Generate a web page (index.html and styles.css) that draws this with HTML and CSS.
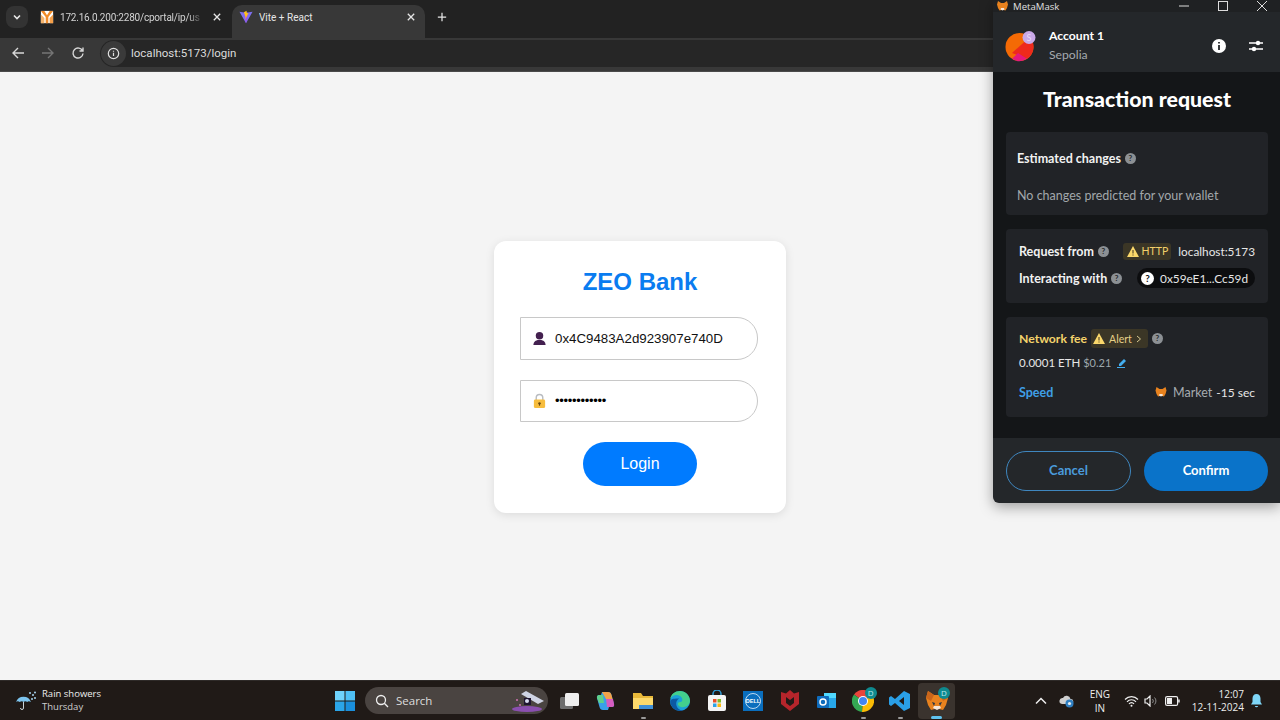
FILE: index.html
```html
<!DOCTYPE html>
<html lang="en">
<head>
<meta charset="utf-8">
<title>Vite + React</title>
<link rel="stylesheet" href="styles.css">
</head>
<body>
<div class="desktop">
  <header class="chrome">
    <div class="tabstrip">
      <button class="tab-search"><svg width="10" height="10" viewBox="0 0 10 10"><path d="M2 3.5 5 6.5 8 3.5" fill="none" stroke="#e8e8e8" stroke-width="1.6"/></svg></button>
      <div class="tab">
        <svg class="favicon" width="14" height="16" viewBox="0 0 16 16"><rect x="1" y="1" width="14" height="14" fill="#fff"/><path d="M1 1h4l3 5 3-5h4L9.500 8v7h-3V8z" fill="#f28c28"/><path d="M1 5l4 4v6H1z" fill="#f5b56e"/><path d="M15 5l-4 4v6h4z" fill="#f5a04a"/></svg>
        <span class="tab-title fade">172.16.0.200:2280/cportal/ip/us</span>
        <svg class="tab-x" width="8" height="8" viewBox="0 0 8 8"><path d="M.8.8l6.400 6.400M7.200.8.800 7.200" stroke="#e6e6e6" stroke-width="1.300"/></svg>
      </div>
      <div class="tab active">
        <svg class="favicon" width="14" height="14" viewBox="0 0 16 16"><path d="M0.500 2 8 3.200 15.500 2 8 15z" fill="#7e6ff0"/><path d="M8 15 5.500 3 8 3.200 10.500 3z" fill="#a64ee8"/><path d="M8.600 0.800 5.600 2.600 7.500 8 7 11 10.800 3.400 9 3.800z" fill="#ffc517"/></svg>
        <span class="tab-title">Vite + React</span>
        <svg class="tab-x" width="8" height="8" viewBox="0 0 8 8"><path d="M.8.8l6.400 6.400M7.200.8.800 7.200" stroke="#e6e6e6" stroke-width="1.300"/></svg>
      </div>
      <svg class="new-tab" width="10" height="10" viewBox="0 0 12 12"><path d="M6 1v10M1 6h10" stroke="#e6e6e6" stroke-width="1.500"/></svg>
    </div>
    <div class="toolbar">
      <svg width="14" height="14" viewBox="0 0 14 14"><path d="M13 7H2M7 2 2 7l5 5" fill="none" stroke="#d8d8d8" stroke-width="1.400"/></svg>
      <svg width="14" height="14" viewBox="0 0 14 14"><path d="M1 7h11M7 2l5 5-5 5" fill="none" stroke="#757575" stroke-width="1.400"/></svg>
      <svg width="14" height="14" viewBox="0 0 14 14"><path d="M11.600 5A5 5 0 1 0 12 7.500M12 1.500V5H8.500" fill="none" stroke="#d8d8d8" stroke-width="1.400"/></svg>
      <div class="omnibox">
        <span class="site-info"><svg width="13" height="13" viewBox="0 0 14 14"><circle cx="7" cy="7" r="5.600" fill="none" stroke="#e0e0e0" stroke-width="1.300"/><path d="M7 6.200v3.600M7 4v1.200" stroke="#e0e0e0" stroke-width="1.300"/></svg></span>
        <span class="url">localhost:5173/login</span>
      </div>
    </div>
  </header>

  <main class="page">
    <form class="card">
      <h1 class="brand">ZEO Bank</h1>
      <div class="field">
        <svg class="field-icon" width="15" height="15" viewBox="0 0 16 16"><circle cx="8" cy="5" r="4" fill="#43204f"/><path d="M1.500 15c0-4 3-5 4.500-5.500h4c1.500.5 4.500 1.500 4.500 5.500z" fill="#43204f"/></svg>
        <span class="field-value">0x4C9483A2d923907e740D</span>
      </div>
      <div class="field">
        <svg class="field-icon" width="15" height="16" viewBox="0 0 16 16"><path d="M4.500 7V4.500a3.500 3.500 0 0 1 7 0V7" fill="none" stroke="#b9bcc0" stroke-width="1.500"/><rect x="2" y="6.500" width="12" height="9" rx="1.500" fill="#f7bd3e"/><circle cx="8" cy="10.500" r="1.300" fill="#6b4a10"/><path d="M8 11v2" stroke="#6b4a10" stroke-width="1.200"/></svg>
        <span class="field-dots">••••••••••••</span>
      </div>
      <button class="login" type="button">Login</button>
    </form>
  </main>

  <footer class="taskbar">
    <div class="weather">
      <svg width="22" height="22" viewBox="0 0 22 22"><path d="M1 12a8 8 0 0 1 15 0c-1.500-1-3-1-3.800 0-1-1-2.600-1-3.700 0-1-1-2.600-1-3.700 0-1.400-1-2.800-1-3.800 0z" fill="#7cc4ee"/><path d="M8.500 12v6a1.500 1.500 0 0 1-3 0" fill="none" stroke="#c9d4da" stroke-width="1"/><g fill="#a6d4f0"><circle cx="15" cy="3" r="1"/><circle cx="18" cy="5" r="1"/><circle cx="20" cy="2.500" r="1"/><circle cx="20" cy="8" r="1"/><circle cx="17" cy="9" r="1"/></g></svg>
      <div class="weather-text"><span class="w1">Rain showers</span><span class="w2">Thursday</span></div>
    </div>
    <div class="task-center">
      <svg width="20" height="20" viewBox="0 0 20 20"><rect x="0" y="0" width="9.500" height="9.500" fill="#6fd2fb"/><rect x="10.500" y="0" width="9.500" height="9.500" fill="#4fc0f5"/><rect x="0" y="10.500" width="9.500" height="9.500" fill="#2ba5e8"/><rect x="10.500" y="10.500" width="9.500" height="9.500" fill="#1a8fdc"/></svg>
      <div class="search">
        <svg width="14" height="14" viewBox="0 0 14 14"><circle cx="6" cy="6" r="4.500" fill="none" stroke="#eee" stroke-width="1.300"/><path d="M9.300 9.300 13 13" stroke="#eee" stroke-width="1.300"/></svg>
        <span class="search-text">Search</span>
        <svg class="search-art" width="34" height="26" viewBox="0 0 34 26"><ellipse cx="16" cy="21" rx="15" ry="3" fill="#8a4fb0"/><path d="M15 3 33 13 27 16 10 6z" fill="#cfd4e4"/><rect x="13" y="10" width="7" height="7" fill="#1e1530"/><circle cx="16" cy="13" r="2" fill="#d8dcf0"/><circle cx="6" cy="12" r="1" fill="#d16fb0"/><circle cx="9" cy="17" r="1" fill="#d16fb0"/></svg>
      </div>
      <div class="task-apps">
        <span class="app"><svg width="22" height="22" viewBox="0 0 22 22"><rect x="1" y="7" width="13" height="12" rx="1.500" fill="#6d6d6d"/><rect x="6" y="3" width="14" height="13" rx="1.500" fill="#eeeeee"/></svg></span>
        <span class="app"><svg width="22" height="22" viewBox="0 0 22 22"><path d="M7 2h6c2 0 3 1 3.500 3L19 14c.5 2-.5 3-2 3h-3l-1 3H8c-2 0-3-1-3.500-3L2 8c-.5-2 1-3 2-3h2z" fill="#3aa0e8"/><path d="M7 2h6c2 0 3 1 3.500 3l1 4H11z" fill="#f3a34a"/><path d="M11 9h7l1 5c.5 2-.5 3-2 3h-5z" fill="#d65cc0"/><path d="M2 8c-.5-2 1-3 2-3h4l1 8H4z" fill="#5fd08a"/></svg></span>
        <span class="app dot"><svg width="22" height="22" viewBox="0 0 22 22"><path d="M1 3h8l2 3h10v13H1z" fill="#e9b93a"/><path d="M1 8h20v11H1z" fill="#fcd96b"/><rect x="7" y="15" width="14" height="4" fill="#3f8fd6"/></svg></span>
        <span class="app"><svg width="22" height="22" viewBox="0 0 22 22"><circle cx="11" cy="11" r="10" fill="#1ba0d8"/><path d="M21 11c0-6-5-10-10-10C6 1 2 4 1.200 9 3 5 8 4 11 6c3 2 3 5 1 6h-1c-3 0-3 4 1 5 4 1 9-2 9-6z" fill="#43cf8d"/><path d="M1.200 11c0 6 5 10 10 10 1 0 2 0 3-.5-4 0-7-3-7-7 0-2 1-4 3-5-4 0-8 0-9 2.500z" fill="#0c59a4"/></svg></span>
        <span class="app"><svg width="22" height="22" viewBox="0 0 22 22"><path d="M7 6V4a4 4 0 0 1 8 0v2" fill="none" stroke="#2f9bd6" stroke-width="1.500"/><rect x="2" y="5" width="18" height="16" rx="2" fill="#f4f4f4"/><rect x="7" y="9" width="3.500" height="3.500" fill="#ea4f2a"/><rect x="11.500" y="9" width="3.500" height="3.500" fill="#7db928"/><rect x="7" y="13.500" width="3.500" height="3.500" fill="#2ba3e8"/><rect x="11.500" y="13.500" width="3.500" height="3.500" fill="#fbb80f"/></svg></span>
        <span class="app"><svg width="20" height="20" viewBox="0 0 20 20"><rect width="20" height="20" fill="#0a6ebd"/><circle cx="10" cy="10" r="7.500" fill="none" stroke="#e8f2fa" stroke-width=".8"/><text x="10" y="12" class="dell">DELL</text></svg></span>
        <span class="app"><svg width="18" height="21" viewBox="0 0 18 21"><path d="M0 2l5 1.500L9 0l4 3.500L18 2v12l-9 7-9-7z" fill="#b5252b"/><path d="M5 7l4 3 4-3v6l-4 3-4-3z" fill="#201a17"/></svg></span>
        <span class="app"><svg width="22" height="22" viewBox="0 0 22 22"><path d="M8 3h12v15H8z" fill="#28a8ea"/><path d="M8 3h12v5H8z" fill="#50d9ff"/><rect x="1" y="6" width="12" height="12" rx="1" fill="#0f6cbd"/><circle cx="7" cy="12" r="3" fill="none" stroke="#fff" stroke-width="1.500"/></svg></span>
        <span class="app dot badged"><svg width="22" height="22" viewBox="0 0 22 22"><path d="M11 11 20.500 5.500A11 11 0 0 0 2 4.500z" fill="#e8453c"/><path d="M11 11 2 4.500A11 11 0 0 0 10 21.900z" fill="#34a853"/><path d="M11 11l-1 10.900A11 11 0 0 0 20.500 5.500z" fill="#fbbc05"/><circle cx="11" cy="11" r="5" fill="#fff"/><circle cx="11" cy="11" r="4" fill="#4285f4"/></svg><b class="badge">D</b></span>
        <span class="app dot"><svg width="22" height="22" viewBox="0 0 22 22"><path d="M15 1l6 3v14l-6 3L6 13l-4 3-2-1.500v-7L2 6l4 3zM15 7l-5 4 5 4z" fill="#2a9fe6"/></svg></span>
        <span class="app current badged"><svg width="24" height="24" viewBox="0 0 24 24"><path d="M1 9l2-7 6 4h6l6-4 2 7-2 7-3 5-4-1h-4l-4 1-3-5z" fill="#e8821e"/><path d="M7 13l3 1-1 3zM17 13l-3 1 1 3z" fill="#233447"/><path d="M8 19l4 2 4-2-1-2H9z" fill="#f5e6d8"/><path d="M1 9l5 3 3-6-6-4z" fill="#c9651a"/><path d="M23 9l-5 3-3-6 6-4z" fill="#c9651a"/></svg><b class="badge">D</b></span>
      </div>
    </div>
    <div class="tray">
      <svg width="12" height="8" viewBox="0 0 12 8"><path d="M1 6.500 6 1.500l5 5" fill="none" stroke="#eee" stroke-width="1.500"/></svg>
      <svg class="tray-cloud" width="16" height="14" viewBox="0 0 16 14"><path d="M3 10a3 3 0 0 1 1-6 4 4 0 0 1 7.500 1A2.500 2.500 0 0 1 12 10z" fill="#cfcfcf"/><circle cx="10.500" cy="9.500" r="4" fill="#2f7fc1"/><circle cx="10.500" cy="9.500" r="1.600" fill="#e6eef5"/></svg>
      <div class="lang"><span>ENG</span><span>IN</span></div>
      <div class="tray-status">
        <svg class="wifi" width="15" height="12" viewBox="0 0 15 12"><path d="M1 4.500a9 9 0 0 1 13 0M3 6.800a6 6 0 0 1 9 0M5 9a3 3 0 0 1 5 0" fill="none" stroke="#eee" stroke-width="1.200"/><circle cx="7.500" cy="10.800" r="1" fill="#eee"/></svg>
        <svg width="14" height="12" viewBox="0 0 14 12"><path d="M1 4h2l3-3v10L3 8H1z" fill="none" stroke="#eee" stroke-width="1.200"/><path d="M8.500 4a3 3 0 0 1 0 4M10.500 2.500a5 5 0 0 1 0 7" fill="none" stroke="#8a8a8a" stroke-width="1"/></svg>
        <svg width="15" height="10" viewBox="0 0 15 10"><rect x="0.600" y="0.600" width="12" height="8.800" rx="1.500" fill="none" stroke="#eee" stroke-width="1.200"/><rect x="2" y="2" width="5" height="6" fill="#eee"/><rect x="13.200" y="3.500" width="1.500" height="3" fill="#eee"/></svg>
      </div>
      <div class="clock"><span>12:07</span><span>12-11-2024</span></div>
      <svg width="13" height="15" viewBox="0 0 13 15"><path d="M6.500 1C4 1 2.500 3 2.500 5.500V9L1 11.500h11L10.500 9V5.500C10.500 3 9 1 6.500 1z" fill="#7fd6f8"/><path d="M4.800 13h3.400a1.800 1.800 0 0 1-3.400 0z" fill="#7fd6f8"/></svg>
    </div>
  </footer>

  <aside class="mm">
    <div class="mm-titlebar">
      <svg width="13" height="12" viewBox="0 0 24 24"><path d="M1 9l2-7 6 4h6l6-4 2 7-2 7-3 5-4-1h-4l-4 1-3-5z" fill="#e8821e"/><path d="M8 19l4 2 4-2-1-3H9z" fill="#f5e6d8"/></svg>
      <span class="mm-app">MetaMask</span>
      <span class="mm-win">
        <svg width="10" height="10" viewBox="0 0 10 10"><path d="M0 5h10" stroke="#ddd"/></svg>
        <svg width="10" height="10" viewBox="0 0 10 10"><rect x=".5" y=".5" width="9" height="9" fill="none" stroke="#ddd"/></svg>
        <svg width="10" height="10" viewBox="0 0 10 10"><path d="M0 0l10 10M10 0 0 10" stroke="#ddd"/></svg>
      </span>
    </div>
    <div class="mm-header">
      <div class="avatar">
        <svg width="36" height="36" viewBox="0 0 36 36"><circle cx="15.500" cy="19" r="14" fill="#f46a05"/><path d="M25.500 9.200a14 14 0 0 1-2.500 21.600L8 25z" fill="#ee2a1c"/><path d="M8 30.800A14 14 0 0 0 23 30.800L14 25z" fill="#e5197c"/><circle cx="25" cy="9.500" r="6.500" fill="#c9a9e8"/><text x="25" y="12.500" class="avatar-s">S</text></svg>
      </div>
      <div class="acct"><span class="acct-name">Account 1</span><span class="acct-net">Sepolia</span></div>
      <svg class="hdr-icon" width="14" height="14" viewBox="0 0 14 14"><circle cx="7" cy="7" r="7" fill="#fff"/><path d="M7 6v5M7 3v1.600" stroke="#24272a" stroke-width="1.800"/></svg>
      <svg class="hdr-icon" width="14" height="14" viewBox="0 0 14 14"><path d="M0 4h14M0 10h14" stroke="#fff" stroke-width="1.300"/><circle cx="9" cy="4" r="2.200" fill="#fff"/><circle cx="5" cy="10" r="2.200" fill="#fff"/></svg>
    </div>
    <div class="mm-main">
      <h2 class="mm-title">Transaction request</h2>
      <section class="mm-card c1">
        <div class="row"><span class="strong">Estimated changes</span><i class="q"></i></div>
        <p class="muted">No changes predicted for your wallet</p>
      </section>
      <section class="mm-card c2">
        <div class="row between">
          <span class="row"><span class="strong">Request from</span><i class="q"></i></span>
          <span class="row tight"><span class="pill-http"><svg width="12" height="11" viewBox="0 0 12 11"><path d="M6 0l6 11H0z" fill="#fbd86b"/><path d="M6 4v3.500M6 8.500v1" stroke="#3a3320"/></svg>HTTP</span><span class="host">localhost:5173</span></span>
        </div>
        <div class="row between">
          <span class="row"><span class="strong">Interacting with</span><i class="q"></i></span>
          <span class="addr"><i class="addr-q">?</i>0x59eE1...Cc59d</span>
        </div>
      </section>
      <section class="mm-card c3">
        <div class="row">
          <span class="strong fee">Network fee</span>
          <span class="pill-alert"><svg width="12" height="11" viewBox="0 0 12 11"><path d="M6 0l6 11H0z" fill="#fbd86b"/><path d="M6 4v3.500M6 8.500v1" stroke="#3a3320"/></svg>Alert<svg width="6" height="8" viewBox="0 0 6 8"><path d="M1 1l3.500 3L1 7" fill="none" stroke="#d8c990"/></svg></span>
          <i class="q q-alert"></i>
        </div>
        <div class="row amount"><span>0.0001 ETH</span><span class="usd">$0.21</span>
          <svg class="edit" width="11" height="11" viewBox="0 0 11 11"><path d="M2 7l5-5 2 2-5 5H2z" fill="#43aef0"/><path d="M0 10.500h8" stroke="#43aef0"/></svg>
        </div>
        <div class="row between speed">
          <span class="speed-label">Speed</span>
          <span class="row market"><svg width="12" height="12" viewBox="0 0 24 24"><path d="M1 9l2-7 6 4h6l6-4 2 7-2 7-3 5-4-1h-4l-4 1-3-5z" fill="#e8821e"/><path d="M8 19l4 2 4-2-1-3H9z" fill="#f5e6d8"/></svg><span class="market-label">Market</span><span class="eta">-15 sec</span></span>
        </div>
      </section>
    </div>
    <div class="mm-footer">
      <button class="mm-btn cancel" type="button">Cancel</button>
      <button class="mm-btn confirm" type="button">Confirm</button>
    </div>
  </aside>
</div>
</body>
</html>
```

FILE: styles.css
```css
* { box-sizing: border-box; }
html, body { margin: 0; height: 100%; overflow: hidden; }
body { font-family: "Liberation Sans", Arial, sans-serif; }
svg { display: block; flex: none; }
button { font: inherit; border: 0; padding: 0; }
h1, h2, p { margin: 0; }

.desktop { position: relative; width: 1280px; height: 720px; display: flex; flex-direction: column; background: #f4f4f4; }

/* Chrome */
.chrome { flex: none; height: 72px; display: flex; flex-direction: column; font-family: Roboto, sans-serif; border-bottom: 1px solid #4a4a4a; }
.tabstrip { height: 38px; flex: none; background: #222222; display: flex; align-items: flex-end; padding-left: 6px; }
.tab-search { width: 22px; height: 22px; margin: 0 0 10px 0; background: #333333; border-radius: 8px; display: flex; align-items: center; justify-content: center; }
.tab { width: 208px; height: 33px; display: flex; align-items: center; padding: 0 15px 9px 12px; color: #d3d3d3; font-size: 10px; }
.tab.active { width: 193px; margin-left: -4px; background: #383838; border-radius: 10px 10px 0 0; color: #e6e6e6; padding: 0 10px 9px 7px; }
.favicon { margin-right: 6px; }
.tab-title { flex: 1; white-space: nowrap; overflow: hidden; }
.fade { letter-spacing: -.2px; -webkit-mask-image: linear-gradient(90deg, #000 86%, transparent 96%); mask-image: linear-gradient(90deg, #000 86%, transparent 96%); }
.tab-x { margin-left: 4px; }
.new-tab { margin: 0 0 16px 12px; }
.toolbar { flex: 1; background: #383838; display: flex; align-items: center; padding: 0 0 3px 11px; gap: 16px; }
.omnibox { flex: 1; height: 27px; margin-left: -1px; background: #262626; border-radius: 14px 0 0 14px; display: flex; align-items: center; padding-left: 1px; }
.site-info { width: 25px; height: 25px; background: #3a3a3a; border-radius: 50%; display: flex; align-items: center; justify-content: center; margin-right: 5px; }
.url { font-size: 11.500px; color: #dcdcdc; }

/* Login */
.page { flex: 1; display: flex; align-items: center; justify-content: center; padding-top: 2px; }
.card { width: 292px; height: 272px; background: #fff; border-radius: 12px; box-shadow: 0 2px 10px rgba(0,0,0,.1); display: flex; flex-direction: column; align-items: center; padding-top: 27px; }
.brand { color: #0a7cf0; font-size: 24px; line-height: 28px; font-weight: 700; margin-bottom: 21px; }
.field { align-self: flex-start; width: 238px; height: 42.500px; margin: 0 0 20px 26px; border: 1px solid #c8c8c8; border-radius: 0 21px 21px 0; display: flex; align-items: center; padding-left: 11px; color: #111; }
.field-icon { margin-right: 8px; }
.field-value { font-size: 13.300px; }
.field-dots { font-size: 13px; letter-spacing: -.3px; color: #000; }
.login { width: 114px; height: 44px; background: #007bff; color: #fff; border-radius: 22px; font-size: 16px; }

/* Taskbar */
.taskbar { flex: none; height: 40px; background: #201a17; display: flex; align-items: center; position: relative; font-family: "Open Sans", sans-serif; color: #eee; border-top: 1px solid #2e2a28; }
.weather { width: 335px; flex: none; padding-left: 15px; display: flex; align-items: center; gap: 5px; }
.weather-text { display: flex; flex-direction: column; font-size: 9.500px; line-height: 13px; margin-top: -2px; }
.w2 { color: #cfcfcf; }
.task-center { display: flex; align-items: center; width: 620px; }
.search { width: 184px; height: 27px; margin-left: 10px; background: #4a4441; border-radius: 14px; display: flex; align-items: center; padding: 0 0 0 10px; gap: 7px; font-size: 11.500px; color: #ddd; }
.search-text { flex: 1; }
.search-art { margin-right: 3px; }
.task-apps { display: flex; margin-left: 3px; }
.app { position: relative; width: 36.700px; height: 36px; display: flex; align-items: center; justify-content: center; }
.app.dot::after { content: ""; position: absolute; left: 16px; bottom: 0; width: 5px; height: 2px; background: #9a9a9a; border-radius: 1px; }
.app.current { background: #3a332e; border-radius: 4px; }
.app.current::after { content: ""; position: absolute; left: 13px; bottom: 0; width: 11px; height: 3px; background: #5fc3f0; border-radius: 2px; }
.badge { position: absolute; top: 4px; right: 5px; width: 12px; height: 12px; border-radius: 50%; background: #0f8a8f; color: #bfe8ea; font-size: 8px; line-height: 12px; text-align: center; font-weight: 400; }
.dell { font: 700 5.500px "Liberation Sans", sans-serif; fill: #ffffff; text-anchor: middle; }
.tray { margin-left: auto; display: flex; align-items: center; padding-right: 17px; }
.tray-cloud { margin-left: 12px; }
.lang { width: 26px; margin-left: 12px; display: flex; flex-direction: column; align-items: center; font-size: 10px; line-height: 14px; }
.tray-status { display: flex; align-items: center; gap: 7px; margin-left: 11px; }
.wifi { margin-right: -2px; }
.clock { margin-left: 12px; display: flex; flex-direction: column; align-items: flex-end; font-size: 10px; line-height: 13px; margin-right: 6px; }

/* MetaMask window */
.mm { position: absolute; left: 993px; top: 0; width: 287px; height: 503px; display: flex; flex-direction: column; background: #24272a; box-shadow: 0 4px 14px rgba(0,0,0,.35); border-radius: 0 0 0 6px; font-family: Lato, sans-serif; color: #fff; font-size: 12.500px; }
.mm-titlebar { height: 12px; flex: none; background: #1f2123; display: flex; align-items: center; padding-left: 3px; gap: 4px; font-family: "Open Sans", sans-serif; font-size: 9.600px; color: #e0e0e0; }
.mm-app { flex: 1; }
.mm-win { display: flex; gap: 29px; padding-right: 13px; }
.mm-header { height: 60px; flex: none; display: flex; align-items: center; padding: 8px 17px 0 11px; background: #24272a; }
.avatar { width: 36px; margin-right: 9px; }
.avatar-s { font: 9px Lato, sans-serif; fill: #e7d8f5; text-anchor: middle; }
.acct { flex: 1; display: flex; flex-direction: column; gap: 2px; line-height: 17px; margin-top: -3px; font-size: 12.200px; }
.acct-name { font-weight: 700; }
.acct-net { color: #a6abb0; }
.hdr-icon { margin-left: 23px; }
.mm-main { flex: 1; background: #141618; padding: 0 12px 0 13px; display: flex; flex-direction: column; gap: 14px; }
.mm-title { font-size: 21.300px; line-height: 24px; font-weight: 900; text-align: center; margin: 15px 0 7px; }
.mm-card { background: #212327; border-radius: 4px; padding: 0 13px; display: flex; flex-direction: column; }
.c1 { height: 83px; padding: 19px 11px 0; gap: 22px; }
.c2 { height: 74px; padding-top: 12px; gap: 7px; }
.c3 { height: 100px; padding-top: 12px; }
.row { display: flex; align-items: center; gap: 4px; white-space: nowrap; }
.between { justify-content: space-between; min-height: 20px; }
.tight { gap: 7px; }
.strong { font-weight: 700; color: #f2f2f2; }
.muted { color: #a2a7ab; }
.q { width: 11px; height: 11px; border-radius: 50%; background: #8c9094; flex: none; font: 700 8px/11px Lato, sans-serif; color: #24272a; text-align: center; }
.q::before { content: "?"; }
.q-alert { margin-left: 0; }
.pill-http { display: flex; align-items: center; gap: 3px; height: 17px; padding: 0 3px 0 4px; background: #3b3626; color: #f2cf6a; border-radius: 3px; font-size: 10.500px; }
.host { color: #e6e6e6; font-size: 11.800px; }
.addr { display: flex; align-items: center; gap: 6px; height: 20px; padding: 0 7px 0 4px; background: #0c0d0f; border-radius: 10px; color: #e6e6e6; font-size: 11.800px; }
.addr-q { width: 13px; height: 13px; border-radius: 50%; background: #fff; color: #111; font-size: 10px; font-style: normal; font-weight: 700; line-height: 13px; text-align: center; }
.fee { color: #f4d36b; font-size: 12.200px; }
.pill-alert { display: flex; align-items: center; gap: 4px; height: 19px; padding: 0 6px 0 2px; background: #3b3626; border-radius: 3px; color: #e6cf86; font-size: 10.500px; }
.amount { margin-top: 7px; gap: 3px; color: #e6e6e6; font-size: 11.500px; min-height: 15px; }
.usd { color: #9ea8ad; font-size: 11px; }
.edit { margin-left: 3px; }
.speed { margin-top: 12px; }
.speed-label { color: #3f9fe6; font-weight: 700; }
.market { gap: 4px; color: #a6abb0; font-size: 12.500px; }
.market svg { margin-right: 2px; }
.eta { color: #e6e6e6; font-size: 12px; }
.mm-footer { height: 65px; flex: none; display: flex; padding: 13px 12px 12px 13px; gap: 13px; }
.mm-btn { height: 40px; border-radius: 20px; font-family: Lato, sans-serif; font-size: 13px; font-weight: 700; padding-bottom: 2px; }
.cancel { flex: 0 0 125px; background: transparent; border: 1px solid #3f87c0; color: #4a9bdc; }
.confirm { flex: 0 0 124px; background: #0a73c9; color: #fff; }
```
